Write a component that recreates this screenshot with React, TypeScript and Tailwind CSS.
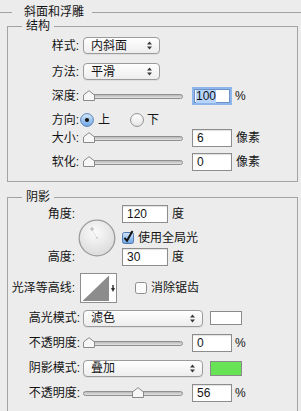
import React from "react";

const Select = ({ value, w }: { value: string; w: string }) => (
	<div
		className={`${w} flex h-[17px] shrink-0 items-center justify-between rounded-[4px] border border-[#9b9b9b] bg-linear-to-b from-white to-[#ededed] pr-[7px] pl-[7px] shadow-[0_1px_0_rgba(0,0,0,0.06)]`}
	>
		<span className="leading-none">{value}</span>
		<svg width="5" height="9" viewBox="0 0 5 9">
			<path d="M2.5 0.5 L5 3.6 H0 Z M0 5.4 H5 L2.5 8.5 Z" fill="#3a3a3a" />
		</svg>
	</div>
);

const Slider = ({ pos }: { pos: number }) => (
	<div className="relative flex h-[12px] w-[100px] shrink-0 flex-col justify-center">
		<div className="h-[5px] rounded-full border border-[#8f8f8f] bg-linear-to-b from-[#b8b8b8] to-[#e4e4e4]" />
		<svg
			className="absolute top-0"
			style={{ left: pos }}
			width="12"
			height="11"
			viewBox="0 0 12 11"
		>
			<path
				d="M0.5 10.5 V5 L6 0.7 L11.5 5 V10.5 Z"
				fill="#f7f7f7"
				stroke="#8a8a8a"
			/>
		</svg>
	</div>
);

const Field = ({ value, w = "w-[40px]" }: { value: string; w?: string }) => (
	<div
		className={`${w} flex h-[18px] shrink-0 items-center border border-[#8d8d8d] bg-white pl-[4px] shadow-[inset_0_1px_1px_rgba(0,0,0,0.12)]`}
	>
		{value}
	</div>
);

const Radio = ({ on }: { on?: boolean }) => (
	<svg width="14" height="14" viewBox="0 0 14 14" className="shrink-0">
		<defs>
			<linearGradient id="rOn" x1="0" y1="0" x2="0" y2="1">
				<stop offset="0" stopColor="#d6e8fb" />
				<stop offset="1" stopColor="#6fa6e6" />
			</linearGradient>
			<linearGradient id="rOff" x1="0" y1="0" x2="0" y2="1">
				<stop offset="0" stopColor="#ffffff" />
				<stop offset="1" stopColor="#e6e6e6" />
			</linearGradient>
		</defs>
		<circle
			cx="7"
			cy="7"
			r="6.4"
			fill={on ? "url(#rOn)" : "url(#rOff)"}
			stroke={on ? "#5a83b9" : "#8e8e8e"}
		/>
		{on && <circle cx="7" cy="7" r="2.1" fill="#151515" />}
	</svg>
);

const Check = ({ on }: { on?: boolean }) => (
	<svg
		width="12"
		height="12"
		viewBox="0 0 12 12"
		className="shrink-0 overflow-visible"
	>
		<defs>
			<linearGradient id="cOn" x1="0" y1="0" x2="0" y2="1">
				<stop offset="0" stopColor="#d3e5fa" />
				<stop offset="1" stopColor="#6aa2e2" />
			</linearGradient>
		</defs>
		<rect
			x="0.5"
			y="0.5"
			width="11"
			height="11"
			rx="2"
			fill={on ? "url(#cOn)" : "#fbfbfb"}
			stroke={on ? "#4f79b0" : "#8e8e8e"}
		/>
		{on && (
			<path
				d="M2.5 5.8 L5 8.8 L10.5 -1"
				fill="none"
				stroke="#141414"
				strokeWidth="2"
			/>
		)}
	</svg>
);

// angle dial, light set at 120deg
const Dial = () => (
	<svg width="38" height="38" viewBox="0 0 38 38" className="shrink-0">
		<defs>
			<radialGradient id="dial" cx="45%" cy="35%" r="70%">
				<stop offset="0" stopColor="#fbfbfb" />
				<stop offset="1" stopColor="#d9d9d9" />
			</radialGradient>
		</defs>
		<circle cx="19" cy="19" r="17.8" fill="url(#dial)" stroke="#9c9c9c" strokeWidth="1.3" />
		<line x1="19" y1="19" x2="14" y2="10.5" stroke="#e2e2e2" />
		<path d="M14 8 V12 M12 10 H16" stroke="#a4a4a4" strokeWidth="0.8" />
		<path d="M19 18 V20" stroke="#b0b0b0" strokeWidth="0.8" />
	</svg>
);

export default function App() {
	return (
		<div className="h-[411px] w-[301px] overflow-hidden bg-[#ececec] font-['Liberation_Sans','Noto_Sans_CJK_SC',sans-serif] text-[12px] text-[#141414]">
			<div className="-mb-[5px] flex h-[24px] items-center">
				<span className="h-px w-[12px] bg-[#a3a3a3]" />
				<span className="ml-[12px] leading-none">斜面和浮雕</span>
				<span className="ml-[8px] h-px flex-1 bg-[#a3a3a3]" />
			</div>

			<fieldset className="mr-[3px] ml-[7px] border border-[#a3a3a3] pb-[10px]">
				<legend className="ml-[14px] px-[4px] leading-[14px]">结构</legend>
				<div className="mt-[4px] flex h-[17px] items-center">
					<span className="w-[71px] text-right">样式:</span>
					<div className="ml-[4px]">
						<Select value="内斜面" w="w-[77px]" />
					</div>
				</div>
				<div className="mt-[9px] flex h-[17px] items-center">
					<span className="w-[71px] text-right">方法:</span>
					<div className="ml-[4px]">
						<Select value="平滑" w="w-[77px]" />
					</div>
				</div>
				<div className="mt-[7px] flex h-[18px] items-center">
					<span className="w-[71px] text-right">深度:</span>
					<div className="ml-[4px]">
						<Slider pos={0} />
					</div>
					<div className="ml-[9px] flex h-[18px] w-[40px] border-2 border-[#8fb6ec]">
						<div className="flex flex-1 items-center border border-[#6b93c9] bg-white pl-px">
							<span className="bg-[#b7d5fb] leading-[13px]">100</span>
						</div>
					</div>
					<span className="ml-[3px]">%</span>
				</div>
				<div className="mt-[8px] flex h-[14px] items-center">
					<span className="w-[71px] text-right">方向:</span>
					<div className="ml-px">
						<Radio on />
					</div>
					<span className="ml-[4px]">上</span>
					<div className="ml-[20px]">
						<Radio />
					</div>
					<span className="ml-[3px]">下</span>
				</div>
				<div className="mt-[2px] flex h-[18px] items-center">
					<span className="w-[71px] text-right">大小:</span>
					<div className="ml-[4px]">
						<Slider pos={0} />
					</div>
					<div className="ml-[9px]">
						<Field value="6" />
					</div>
					<span className="ml-[4px]">像素</span>
				</div>
				<div className="mt-[6px] flex h-[18px] items-center">
					<span className="w-[71px] text-right">软化:</span>
					<div className="ml-[4px]">
						<Slider pos={0} />
					</div>
					<div className="ml-[9px]">
						<Field value="0" />
					</div>
					<span className="ml-[4px]">像素</span>
				</div>
			</fieldset>

			<fieldset className="mt-[8px] mr-[3px] ml-[7px] border border-[#a3a3a3] pb-[20px]">
				<legend className="ml-[14px] px-[4px] leading-[14px]">阴影</legend>
				<div className="mt-[1px] flex">
					<div className="flex h-[61px] w-[67px] flex-col justify-between text-right leading-[18px]">
						<span>角度:</span>
						<span>高度:</span>
					</div>
					<div className="mt-[14px] ml-[3px]">
						<Dial />
					</div>
					<div className="ml-[6px] flex flex-col">
						<div className="flex h-[18px] items-center">
							<Field value="120" w="w-[46px]" />
							<span className="ml-[4px]">度</span>
						</div>
						<div className="mt-[8px] flex h-[14px] items-center">
							<Check on />
							<span className="ml-[4px]">使用全局光</span>
						</div>
						<div className="mt-[3px] flex h-[18px] items-center">
							<Field value="30" w="w-[46px]" />
							<span className="ml-[4px]">度</span>
						</div>
					</div>
				</div>

				<div className="mt-[7px] flex h-[30px] items-center">
					<span className="w-[67px] text-right">光泽等高线:</span>
					<div className="ml-[5px] flex h-[30px] w-[37px] border border-[#8e8e8e] bg-white">
						<svg width="29" height="28" viewBox="0 0 29 28">
							<path d="M1.5 27 L28 1.5 V27 Z" fill="#8c8c8c" />
						</svg>
						<div className="flex flex-1 items-center justify-center">
							<svg width="4" height="7" viewBox="0 0 4 7">
								<path d="M1.3 0 H2.7 V3 H4 L2 7 L0 3 H1.3 Z" fill="#2e2e2e" />
							</svg>
						</div>
					</div>
					<div className="ml-[18px]">
						<Check />
					</div>
					<span className="ml-[4px]">消除锯齿</span>
				</div>

				<div className="mt-[6px] flex h-[18px] items-center">
					<span className="w-[72px] text-right">高光模式:</span>
					<div className="ml-[3px]">
						<Select value="滤色" w="w-[120px]" />
					</div>
					<span className="ml-[7px] h-[14px] w-[32px] border border-[#8a8a8a] bg-white" />
				</div>
				<div className="mt-[7px] flex h-[18px] items-center">
					<span className="w-[72px] text-right">不透明度:</span>
					<div className="ml-[3px]">
						<Slider pos={0} />
					</div>
					<div className="ml-[9px]">
						<Field value="0" />
					</div>
					<span className="ml-[3px]">%</span>
				</div>
				<div className="mt-[7px] flex h-[18px] items-center">
					<span className="w-[72px] text-right">阴影模式:</span>
					<div className="ml-[3px]">
						<Select value="叠加" w="w-[120px]" />
					</div>
					<span className="ml-[7px] h-[15px] w-[32px] border border-[#8a8a8a] bg-[#68e356]" />
				</div>
				<div className="mt-[7px] flex h-[18px] items-center">
					<span className="w-[72px] text-right">不透明度:</span>
					<div className="ml-[3px]">
						<Slider pos={49} />
					</div>
					<div className="ml-[9px]">
						<Field value="56" />
					</div>
					<span className="ml-[3px]">%</span>
				</div>
			</fieldset>
		</div>
	);
}
